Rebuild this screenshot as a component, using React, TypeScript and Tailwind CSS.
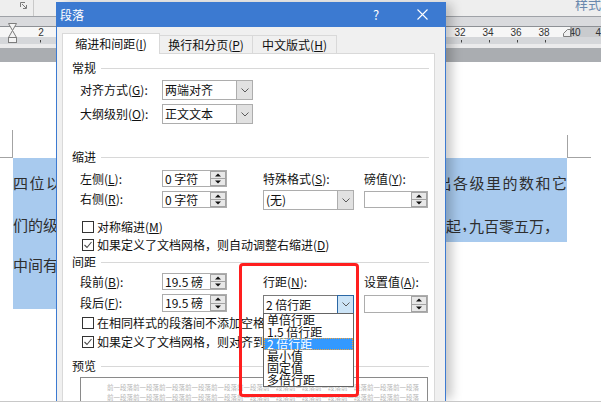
import React from "react";

function U({ c }: { c: string }) {
  return (
    <span>
      (<span className="underline underline-offset-1">{c}</span>)
    </span>
  );
}

function Sel({ v, active = false }: { v: string; active?: boolean }) {
  return (
    <div className="flex h-full w-[91px]">
      <div
        className={
          active
            ? "flex-1 overflow-hidden whitespace-nowrap border border-r-0 border-[#7a7a7a] bg-white pl-[2px] leading-[17px]"
            : "flex-1 overflow-hidden whitespace-nowrap border border-r-0 border-[#adadad] bg-white pl-[2px] leading-[18px]"
        }
      >
        {v}
      </div>
      <div
        className={
          active
            ? "flex w-[17px] items-center justify-center border border-[#2b67a4] bg-[#cce4f7]"
            : "flex w-[17px] items-center justify-center border border-[#adadad] bg-[#e1e1e1]"
        }
      >
        <svg width="8" height="5" viewBox="0 0 8 5">
          <path d="M0.5 0.5L4 4L7.5 0.5" fill="none" stroke="#5a5a5a" strokeWidth="1" />
        </svg>
      </div>
    </div>
  );
}

function Spin({ v, narrow = false }: { v: string; narrow?: boolean }) {
  return (
    <div className={narrow ? "flex h-full w-[64px] border border-[#adadad] bg-white" : "flex h-full w-[65px] border border-[#adadad] bg-white"}>
      <div className="flex-1 overflow-hidden whitespace-nowrap pl-[2px] leading-[15px]">{v}</div>
      <div className="flex w-[16px] flex-col">
        <div className="flex flex-1 items-center justify-center border border-[#a3a3a3] bg-[#e8e8e8]">
          <svg width="6" height="4" viewBox="0 0 6 4">
            <path d="M0 3.5L3 0.5L6 3.5Z" fill="#111" />
          </svg>
        </div>
        <div className="flex flex-1 items-center justify-center border border-t-0 border-[#a3a3a3] bg-[#e8e8e8]">
          <svg width="6" height="4" viewBox="0 0 6 4">
            <path d="M0 0.5L3 3.5L6 0.5Z" fill="#111" />
          </svg>
        </div>
      </div>
    </div>
  );
}

function Hdr({ t, className }: { t: string; className: string }) {
  return (
    <div className={"flex h-[14px] items-center gap-[5px] pl-[9px] pr-[5px] " + className}>
      <span className="leading-[14px]">{t}</span>
      <div className="h-px flex-1 bg-[#d8d8d8]" />
    </div>
  );
}

function Chk({ checked = false, children, className }: { checked?: boolean; children: React.ReactNode; className: string }) {
  return (
    <div className={"flex h-[14px] items-center pl-[19px] " + className}>
      <div className="mr-[3px] flex h-[12px] w-[12px] shrink-0 items-center justify-center border border-[#333] bg-white">
        {checked && (
          <svg width="10" height="10" viewBox="0 0 10 10">
            <path d="M1.5 5L4 7.5L8.5 2" fill="none" stroke="#4a4a4a" strokeWidth="1.1" />
          </svg>
        )}
      </div>
      <span className="whitespace-nowrap leading-[14px]">{children}</span>
    </div>
  );
}

function Ruler() {
  const nums = [
    { x: 41, t: "2" },
    { x: 460, t: "32" },
    { x: 488, t: "34" },
    { x: 516, t: "36" },
    { x: 544, t: "38" },
    { x: 575, t: "40" },
    { x: 601, t: "42" },
  ];
  return (
    <svg width="601" height="31" viewBox="0 0 601 31" className="block shrink-0">
      <rect x="0" y="0" width="601" height="9" fill="#d9dadd" />
      <rect x="0" y="9" width="601" height="1" fill="#8d9095" />
      <rect x="0" y="10" width="571" height="10" fill="#f6f6f6" />
      <rect x="571" y="10" width="30" height="10" fill="#c9cbce" />
      <rect x="0" y="20" width="601" height="7" fill="#d5d7da" />
      <rect x="0" y="27" width="601" height="4" fill="#ebebec" />
      {nums.map((n) => (
        <text key={n.t} x={n.x} y="18.5" fontSize="10" textAnchor="middle" fill="#333" fontFamily="Liberation Sans, sans-serif">
          {n.t}
        </text>
      ))}
      {[40, 461, 489, 517, 545].map((x) => (
        <rect key={x} x={x} y="23" width="1" height="2.5" fill="#444" />
      ))}
      <path d="M8.5 6.5H16.5L12.5 13.5Z" fill="#f4f4f4" stroke="#7d7d7d" strokeWidth="1" />
      <path d="M12.5 13.5L8.5 20.5H16.5Z" fill="#f4f4f4" stroke="#7d7d7d" strokeWidth="1" />
      <rect x="8.5" y="20.5" width="8" height="5" fill="#f4f4f4" stroke="#7d7d7d" strokeWidth="1" />
      <path d="M563.5 19.5H570.5V12.5H567.5L563.5 16.5Z" fill="#efefef" stroke="#7d7d7d" strokeWidth="1" />
      <rect x="570.5" y="10" width="1" height="10" fill="#6d6d6d" />
    </svg>
  );
}

export default function App() {
  return (
    <div className="relative flex h-[402px] w-[601px] flex-col overflow-hidden border-b border-[#c8c8c8] bg-white font-['Noto_Sans_CJK_SC',sans-serif] text-[#1a1a1a]">
      {/* toolbar strip */}
      <div className="flex h-[17px] shrink-0 border-b border-[#9fa2a7] bg-[#eeeeee]">
        <div className="flex h-full w-[34px] items-start justify-end border-r border-[#c9c9c9] pr-[6px] pt-[2px]">
          <svg width="7" height="7" viewBox="0 0 7 7">
            <path d="M0.5 5V0.5H5M2 2L6 6M6.5 3V6.5H3" fill="none" stroke="#7a7a7a" strokeWidth="1" />
          </svg>
        </div>
        <div className="flex-1" />
        <div className="-mt-[4px] shrink-0 whitespace-nowrap text-[13px] leading-[16px] text-[#6a88ad]">样式</div>
      </div>

      <Ruler />
      <div className="h-[14px] shrink-0 bg-[#aaadb1]" />

      {/* document page */}
      <div className="flex flex-1 flex-col pt-[68px]">
        <div className="flex h-[28px] shrink-0 items-start">
          <div className="h-[28px] w-[13px] border-b border-r border-[#a3a3a3]" />
          <div className="flex-1" />
          <div className="mr-[10px] mt-[5px] h-[23px] w-[24px] border-b border-l border-[#a3a3a3]" />
        </div>
        <div className="ml-[13px] w-[554px] text-[15px] leading-[15px] text-[#2e2e2e]">
          <div className="flex h-[42px] justify-between overflow-hidden bg-[#a8caee] pt-[17px]">
            <span className="whitespace-nowrap tracking-[1.5px]">四位以上的整数，</span>
            <span className="-mr-[1.5px] whitespace-nowrap tracking-[1.5px]">读出各级里的数和它</span>
          </div>
          <div className="flex h-[42px] justify-between overflow-hidden bg-[#a8caee] pr-[8px] pt-[17px]">
            <span className="whitespace-nowrap">们的级别，</span>
            <span className="whitespace-nowrap">
              从高位起<span className="inline-block w-[8px] overflow-hidden">，</span>九百零五万，
            </span>
          </div>
          <div className="h-[67px] w-[300px] whitespace-nowrap bg-[#a8caee] pt-[15px]">中间有零</div>
        </div>
      </div>

      {/* dialog */}
      <div className="absolute left-[56px] top-[2px] z-10 flex h-[399px] w-[390px] flex-col overflow-hidden border-x border-[#3c7ad1] bg-[#f0f0f0] text-[12px] leading-[14px] text-[#111] shadow-[8px_0_10px_-2px_rgba(0,0,0,0.22)]">
        <div className="flex h-[25px] shrink-0 items-center bg-[#3c7ad1] text-white">
          <span className="pl-[3px] text-[12px] leading-[14px]">段落</span>
          <div className="flex-1" />
          <div className="flex w-[46px] justify-center text-[13px] leading-[14px]">?</div>
          <div className="flex w-[46px] justify-center">
            <svg width="11" height="11" viewBox="0 0 11 11">
              <path d="M0.5 0.5L10.5 10.5M10.5 0.5L0.5 10.5" stroke="#fff" strokeWidth="1.1" />
            </svg>
          </div>
        </div>

        <div className="flex flex-1 flex-col pl-[5px] pt-[6px]">
          <div className="flex h-[20px] shrink-0 items-end">
            <div className="relative z-10 -mb-px flex h-[21px] w-[98px] items-center justify-center border border-b-0 border-[#d9d9d9] bg-white">
              <span className="whitespace-nowrap">
                缩进和间距<U c="I" />
              </span>
            </div>
            <div className="flex h-[18px] w-[93px] items-center justify-center border border-b-0 border-l-0 border-[#d9d9d9] bg-[#f0f0f0]">
              <span className="whitespace-nowrap">
                换行和分页<U c="P" />
              </span>
            </div>
            <div className="flex h-[18px] w-[84px] items-center justify-center border border-b-0 border-l-0 border-[#d9d9d9] bg-[#f0f0f0]">
              <span className="whitespace-nowrap">
                中文版式<U c="H" />
              </span>
            </div>
          </div>

          <div className="flex h-[400px] w-[373px] flex-col border border-[#d9d9d9] bg-white">
            <Hdr t="常规" className="mt-[7px]" />
            <div className="mt-[5px] flex h-[20px] items-center pl-[17px]">
              <span className="w-[82px] whitespace-nowrap">
                对齐方式<U c="G" />:
              </span>
              <Sel v="两端对齐" />
            </div>
            <div className="mt-[4px] flex h-[20px] items-center pl-[17px]">
              <span className="w-[82px] whitespace-nowrap">
                大纲级别<U c="O" />:
              </span>
              <Sel v="正文文本" />
            </div>

            <Hdr t="缩进" className="mt-[26px]" />
            <div className="mt-[6px] flex h-[17px] pl-[17px]">
              <div className="flex w-[183px]">
                <span className="w-[82px] whitespace-nowrap leading-[17px]">
                  左侧<U c="L" />:
                </span>
                <Spin v="0 字符" />
              </div>
              <span className="w-[101px] whitespace-nowrap leading-[17px]">
                特殊格式<U c="S" />:
              </span>
              <span className="whitespace-nowrap leading-[17px]">
                磅值<U c="Y" />:
              </span>
            </div>
            <div className="mt-[3px] flex h-[20px] pl-[17px]">
              <div className="flex w-[183px] items-start">
                <span className="w-[82px] whitespace-nowrap leading-[18px]">
                  右侧<U c="R" />:
                </span>
                <div className="mt-[1px] h-[17px]">
                  <Spin v="0 字符" />
                </div>
              </div>
              <div className="h-[20px] w-[101px]">
                <Sel v="(无)" />
              </div>
              <div className="mt-[1px] h-[17px]">
                <Spin v="" narrow />
              </div>
            </div>

            <Chk className="mt-[10px]">
              对称缩进<U c="M" />
            </Chk>
            <Chk checked className="mt-[4px]">
              如果定义了文档网格，则自动调整右缩进<U c="D" />
            </Chk>

            <Hdr t="间距" className="mt-[3px]" />
            <div className="mt-[4px] flex h-[17px] pl-[17px]">
              <div className="flex w-[183px]">
                <span className="w-[82px] whitespace-nowrap leading-[17px]">
                  段前<U c="B" />:
                </span>
                <Spin v="19.5 磅" />
              </div>
              <span className="w-[101px] whitespace-nowrap leading-[17px]">
                行距<U c="N" />:
              </span>
              <span className="whitespace-nowrap leading-[17px]">
                设置值<U c="A" />:
              </span>
            </div>
            <div className="mt-[4px] flex h-[20px] pl-[17px]">
              <div className="flex w-[183px] items-start">
                <span className="w-[82px] whitespace-nowrap leading-[18px]">
                  段后<U c="F" />:
                </span>
                <div className="h-[18px]">
                  <Spin v="19.5 磅" />
                </div>
              </div>
              <div className="mt-[1px] h-[19px] w-[101px]">
                <Sel v="2 倍行距" active />
              </div>
              <div className="mt-[1px] h-[18px]">
                <Spin v="" narrow />
              </div>
            </div>

            <Chk className="mt-[2px]">
              在相同样式的段落间不添加空格<U c="C" />
            </Chk>
            <Chk checked className="mt-[5px]">
              如果定义了文档网格，则对齐到网格<U c="W" />
            </Chk>

            <Hdr t="预览" className="mt-[10px]" />
            <div className="ml-[17px] mt-[4px] h-[40px] w-[348px] overflow-hidden whitespace-nowrap border border-[#8a8a8a] bg-white pl-[26px] pt-[4px] text-[6.5px] leading-[10px] text-[#b5b5b5]">
              <div>前一段落前一段落前一段落前一段落前一段落前一段落前一段落前一段落前一段落前一段落前一段落前一段落</div>
              <div>前一段落前一段落前一段落前一段落前一段落前一段落前一段落前一段落前一段落前一段落前一段落前一段落</div>
            </div>
          </div>
        </div>

        {/* open dropdown list */}
        <div className="absolute left-[206px] top-[311px] z-20 flex w-[91px] flex-col border border-[#646464] bg-white text-[12px] leading-[12px]">
          <div className="h-[12px] whitespace-nowrap pl-[3px]">单倍行距</div>
          <div className="h-[12px] whitespace-nowrap pl-[3px]">1.5 倍行距</div>
          <div className="h-[12px] whitespace-nowrap bg-[#3399ff] pl-[3px] text-white outline-1 -outline-offset-1 outline-dotted outline-[#f0a23c]">2 倍行距</div>
          <div className="h-[12px] whitespace-nowrap pl-[3px]">最小值</div>
          <div className="h-[12px] whitespace-nowrap pl-[3px]">固定值</div>
          <div className="h-[12px] whitespace-nowrap pl-[3px]">多倍行距</div>
        </div>
      </div>

      {/* red annotation box */}
      <div className="absolute left-[239px] top-[263px] z-30 h-[134px] w-[120px] rounded-[4px] border-[3px] border-[#ff1e1e]" />
    </div>
  );
}
